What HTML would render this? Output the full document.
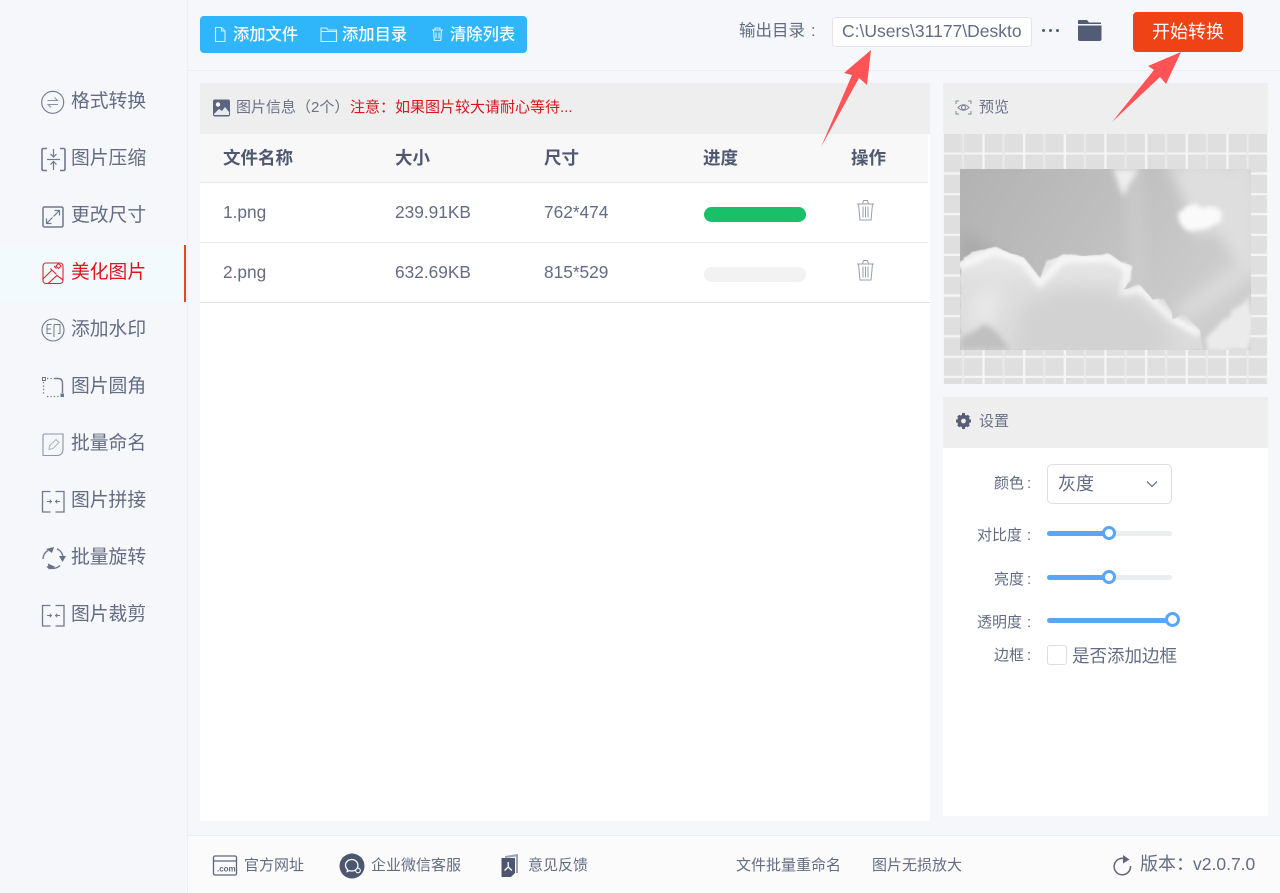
<!DOCTYPE html>
<html lang="zh"><head><meta charset="utf-8"><title>图片转换</title>
<style>
*{box-sizing:border-box}
html,body{margin:0;padding:0}
body{width:1280px;height:893px;overflow:hidden;position:relative;background:#f6f7fb;font-family:"Liberation Sans","Noto Sans CJK SC",sans-serif;color:#5b6479}
.a{position:absolute;white-space:nowrap}
svg{position:absolute;overflow:visible}
.nav{left:71px;font-size:18.800px;line-height:26px;color:#636c82}
.th{font-size:17.500px;font-weight:700;color:#4f5870;line-height:24px;top:146px}
.td{font-size:17.300px;color:#636c82;line-height:24px}
.lab{font-size:15px;line-height:20px;color:#636c82}
.lab i{font-style:normal;margin-left:3px}
.tw{font-size:16.300px;color:#fff;line-height:22px;top:24px;font-weight:500}
.ft{font-size:15px;color:#636c82;line-height:20px;top:856px}
.i{fill:none;stroke:#6f788e;stroke-width:1.100}
</style></head><body>

<!-- structure -->
<div class="a" style="left:187px;top:0;width:1px;height:893px;background:#eef0f4"></div>
<div class="a" style="left:188px;top:70px;width:1092px;height:1px;background:#eceef2"></div>
<div class="a" style="left:0;top:245px;width:187px;height:57px;background:#f2fafe"></div>
<div class="a" style="left:184px;top:245px;width:2px;height:57px;background:#f0431a"></div>

<!-- sidebar icons -->
<svg style="left:0;top:0" width="70" height="640" viewBox="0 0 70 640">
 <g class="i">
  <circle cx="52.700" cy="102.300" r="11"/><path d="M47.500 100.500h10l-3-3M58 104.500H48l3 3" stroke="#8a92a4"/>
  <path d="M47 148.500h-3.500q-1.500 0-1.500 1.500v19q0 1.500 1.500 1.500H47M60 148.500h3.500q1.500 0 1.500 1.500v19q0 1.500-1.500 1.500H60" stroke-width="1.600"/>
  <path d="M47 159.500h13" stroke-width="1.200"/>
  <path d="M53.500 149v7.500m-3-2.500l3 3 3-3M53.500 170v-8m-3 2.500l3-3 3 3" stroke-width="1.200"/>
  <rect x="43" y="207" width="20" height="20" rx="1.500" stroke-width="1.500"/><path d="M46.500 223.500l6-6M46.500 218.500v5h5M59.500 210.500l-6 6M54.500 210.500h5v5" stroke-width="1.200"/>
  <circle cx="53" cy="330" r="11"/><path d="M47 324.500h4.500M47 324.500v9h4.500M47 329h4M54 324.500h6v9h-2M54 324.500v12.500" stroke-width="1"/>
  <path d="M43.500 382v13M47 396.500h12M47 378.500h5" stroke-dasharray="1.300 2.100" stroke-width="1.300"/>
  <path d="M54 378.500h4q4.500 0 4.500 4.500v10" stroke-width="1.400"/>
  <rect x="42.500" y="377.500" width="3" height="3" stroke-width="1"/>
  <path d="M45 434h18v15q0 6.500-6.500 6.500H43V436q0-2 2-2z" stroke="#8d95a7"/><path d="M49 449.500l1-4 6-6 3 3-6 6z" stroke="#b0b5c2"/>
  <path d="M50.500 491.500H42.500v20.500h8M55.500 491.500h8.500v20.500h-8.500" stroke-width="1.300"/><path d="M47 501.500h4.500m-1.800-1.800l1.800 1.800-1.800 1.800M60 501.500h-4.500m1.800-1.800l-1.800 1.800 1.800 1.800" stroke-width="1"/>
  <path d="M50.500 605.500H42.500v20.500h8M55.500 605.500h8.500v20.500h-8.500" stroke-width="1.300"/><path d="M47 615.500h4.500m-1.800-1.800l1.800 1.800-1.800 1.800M60 615.500h-4.500m1.800-1.800l-1.800 1.800 1.800 1.800" stroke-width="1"/>
  <path d="M43 559a10 10 0 0 1 5-8.500M57 548.800a10 10 0 0 1 6 8.500M60 565.500a10 10 0 0 1-13 1" stroke-width="1.400"/>
 </g>
 <path fill="#667087" d="M46 549l8-2-2 6zM59 556h7l-3.500 6zM48 563.500l7.500 3.500-7 2.500z"/>
 <rect x="60.500" y="393.500" width="3.500" height="3.500" fill="#6f788e"/>
 <g fill="none" stroke="#d9262c" stroke-width="1.100">
  <rect x="43" y="263" width="20" height="20.500" rx="3"/>
  <path d="M43 279l9-9 4.500 4.500M48 283.500l9-8 6 4.500M50.500 268.500l2 2M54 266l2.500 2.500M58.500 263.500l2.500 2.500-2.500 2.500-2.500-2.500z"/>
 </g>
</svg>
<div class="a nav" style="top:88px">格式转换</div>
<div class="a nav" style="top:145px">图片压缩</div>
<div class="a nav" style="top:202px">更改尺寸</div>
<div class="a nav" style="top:259px;color:#e1141c">美化图片</div>
<div class="a nav" style="top:316px">添加水印</div>
<div class="a nav" style="top:373px">图片圆角</div>
<div class="a nav" style="top:430px">批量命名</div>
<div class="a nav" style="top:487px">图片拼接</div>
<div class="a nav" style="top:544px">批量旋转</div>
<div class="a nav" style="top:601px">图片裁剪</div>

<!-- toolbar -->
<div class="a" style="left:200px;top:16px;width:327px;height:37px;background:#2fb6fa;border-radius:4px"></div>
<svg style="left:200px;top:16px" width="327" height="37" fill="none" stroke="#d5f0ff" stroke-width="1.100">
 <path d="M15.500 11.500h6l3.500 3.500v10.500h-9.500zM21.500 11.500v3.500H25"/>
 <path d="M121 12h5.500l1.500 2h8.500v11.500H121zM121 15.500h15.500"/>
 <path d="M232 14h11M235 14v-2h5v2M233.500 14l.8 10.500h6.400l.8-10.500M236 16.500v6M239 16.500v6"/>
</svg>
<div class="a tw" style="left:233px">添加文件</div>
<div class="a tw" style="left:342px">添加目录</div>
<div class="a tw" style="left:450px">清除列表</div>

<div class="a" style="left:739px;top:19px;font-size:16.500px;line-height:24px;color:#636c82">输出目录<span style="margin-left:6px">:</span></div>
<div class="a" style="left:832px;top:17px;width:200px;height:30px;background:#fff;border:1px solid #e2e4ea;border-radius:4px"></div>
<div class="a" style="left:842px;top:20px;font-size:17.500px;line-height:22px;color:#636c82;width:181px;overflow:hidden">C:\Users\31177\Deskto</div>
<svg style="left:1040px;top:20px" width="70" height="24" fill="#535c75">
 <circle cx="3.500" cy="10.500" r="1.500"/><circle cx="10.500" cy="10.500" r="1.500"/><circle cx="17.500" cy="10.500" r="1.500"/>
 <path d="M38 1q0-1 1-1h8l2 2.500h12v1.500H38z"/><path d="M38 5.500h23.500V19q0 2-2 2H40q-2 0-2-2z"/>
</svg>
<div class="a" style="left:1133px;top:12px;width:110px;height:40px;background:#f04315;border-radius:4px;color:#fff;font-size:18px;line-height:40px;text-align:center">开始转换</div>

<!-- main table -->
<div class="a" style="left:200px;top:83px;width:730px;height:738px;background:#fff"></div>
<div class="a" style="left:200px;top:83px;width:730px;height:51px;background:#eeeeef"></div>
<div class="a" style="left:200px;top:134px;width:728px;height:49px;background:#f8f8f9;border-bottom:1px solid #e8e9ec"></div>
<div class="a" style="left:200px;top:242px;width:728px;height:1px;background:#e8e9ec"></div>
<div class="a" style="left:200px;top:302px;width:730px;height:1px;background:#dfe0e4"></div>
<svg style="left:213px;top:99px" width="18" height="18"><rect width="17" height="17" y=".5" rx="2" fill="#5b6580"/><circle cx="5" cy="5.500" r="2.200" fill="#fff"/><path d="M1 15l5-5 3 2 3-4 4 5v3H1z" fill="#e8eaf0"/></svg>
<div class="a" style="left:236px;top:98px;font-size:15px;line-height:20px;color:#6a7287">图片信息（2个）</div>
<div class="a" style="left:350px;top:98px;font-size:15px;line-height:20px;color:#d9151b">注意：如果图片较大请耐心等待...</div>

<div class="a th" style="left:223px">文件名称</div>
<div class="a th" style="left:395px">大小</div>
<div class="a th" style="left:544px">尺寸</div>
<div class="a th" style="left:703px">进度</div>
<div class="a th" style="left:851px">操作</div>

<div class="a td" style="left:223px;top:200px">1.png</div>
<div class="a td" style="left:395px;top:200px">239.91KB</div>
<div class="a td" style="left:544px;top:200px">762*474</div>
<div class="a" style="left:704px;top:207px;width:102px;height:15px;border-radius:8px;background:#1abf6a"></div>
<div class="a td" style="left:223px;top:260px">2.png</div>
<div class="a td" style="left:395px;top:260px">632.69KB</div>
<div class="a td" style="left:544px;top:260px">815*529</div>
<div class="a" style="left:704px;top:267px;width:102px;height:15px;border-radius:8px;background:#f2f2f3"></div>
<svg style="left:856px;top:198px" width="20" height="84" fill="none" stroke="#979dad" stroke-width="1">
 <path d="M1 6h17M6.500 6l1-3.500h4l1 3.500M2.500 6l1.500 16h11l1.500-16M7 8.500v11M9.500 8.500v11M12 8.500v11"/>
 <path transform="translate(0,60)" d="M1 6h17M6.500 6l1-3.500h4l1 3.500M2.500 6l1.500 16h11l1.500-16M7 8.500v11M9.500 8.500v11M12 8.500v11"/>
</svg>

<!-- preview panel -->
<div class="a" style="left:943px;top:83px;width:325px;height:51px;background:#eeeeef"></div>
<svg style="left:955px;top:99px" width="18" height="18" fill="none" stroke="#7d8598" stroke-width="1"><path d="M1 5V2h3M13 2h3v3M1 12v3h3M13 15h3v-3"/><path d="M3 8.500Q8.500 3 14 8.500 8.500 14 3 8.500z"/><circle cx="8.500" cy="8.500" r="2"/></svg>
<div class="a" style="left:979px;top:98px;font-size:15px;line-height:20px;color:#6a7287">预览</div>
<svg style="left:943px;top:134px" width="325" height="250">
 <defs>
  <pattern id="g" x="1" y="0" width="40.660" height="40.660" patternUnits="userSpaceOnUse">
   <rect width="40.660" height="40.660" fill="#f5f5f6"/>
   <rect x="0" y="0" width="38.300" height="18.500" fill="#dfdfdf"/>
   <rect x="0" y="20.600" width="38.300" height="17.800" fill="#dfdfdf"/>
   <rect x="17.800" y="0" width="2.300" height="40.660" fill="#e9e9ea"/>
  </pattern>
  <linearGradient id="sky" x1="0" y1="0" x2="1" y2=".4"><stop offset="0" stop-color="#b2b2b2"/><stop offset=".45" stop-color="#bdbdbd"/><stop offset="1" stop-color="#cdcdcd"/></linearGradient>
  <linearGradient id="cl" x1="0" y1="0" x2="0" y2="1"><stop offset="0" stop-color="#eaeaea"/><stop offset=".4" stop-color="#dedede"/><stop offset="1" stop-color="#dadada"/></linearGradient>
  <filter id="fl" x="-5%" y="-5%" width="110%" height="110%"><feTurbulence type="fractalNoise" baseFrequency=".12" numOctaves="3" seed="4"/><feDisplacementMap in="SourceGraphic" scale="4"/><feGaussianBlur stdDeviation=".7"/></filter>
  <filter id="fl2" x="-30%" y="-30%" width="160%" height="160%"><feTurbulence type="fractalNoise" baseFrequency=".05" numOctaves="3" seed="8"/><feDisplacementMap in="SourceGraphic" scale="20"/><feGaussianBlur stdDeviation="6"/></filter>
  <filter id="fl3" x="-30%" y="-30%" width="160%" height="160%"><feTurbulence type="fractalNoise" baseFrequency=".07" numOctaves="3" seed="3"/><feDisplacementMap in="SourceGraphic" scale="10"/><feGaussianBlur stdDeviation="2"/></filter>
  <filter id="b2" x="-30%" y="-30%" width="160%" height="160%"><feGaussianBlur stdDeviation="8"/></filter>
  <filter id="b3" x="-30%" y="-30%" width="160%" height="160%"><feGaussianBlur stdDeviation="3"/></filter>
  <clipPath id="c"><rect x="17" y="35" width="291" height="181"/></clipPath>
  <clipPath id="cc"><path d="M17 128L29 118 52 113 67 119 80 123 87 131 97 144 104 128 120 120 140 122 167 120 179 129 189 131 187 146 180 156 197 151 210 166 220 164 229 178 229 185 242 181 257 196 260 216 H17z"/></clipPath>
 </defs>
 <rect width="325" height="250" fill="url(#g)"/>
 <g clip-path="url(#c)">
  <rect x="17" y="35" width="291" height="181" fill="url(#sky)"/>
  <path d="M17 95l60 40H17z" fill="#a8a8a8" filter="url(#b2)"/>
  <path d="M183 35h12l8 120h-12z" fill="#cecece" filter="url(#b2)"/>
  <path d="M308 118l-80 62 14 8 66-45z" fill="#dcdcdc" filter="url(#b2)"/>
  <path d="M222 30h90v110q-6 0-16-8-8-14-14-28-18-2-34-6-8-14-4-26-10-20-22-42z" fill="#dedede" filter="url(#fl2)"/>
  <path d="M236 76q14-6 22-3 16-2 22 6 4 14-8 12-14 5-30 4-8-8-6-19z" fill="#fafafa" filter="url(#fl3)"/>
  <path d="M170 35h26l-10 16-6 12z" fill="#eeeeee" filter="url(#b3)"/>
  <path d="M263 216q-3-14 8-22 14-12 24-20l13-12v54z" fill="#ebebeb" filter="url(#fl3)"/>
  <path d="M17 128L29 118 52 113 67 119 80 123 87 131 97 144 104 128 120 120 140 122 167 120 179 129 189 131 187 146 180 156 197 151 210 166 220 164 229 178 229 185 242 181 257 196 260 216H17z" fill="url(#cl)" filter="url(#fl)"/>
  <g clip-path="url(#cc)">
   <path d="M17 132L52 117 80 127 97 150 120 125 167 124 185 135 180 160 197 155 229 185 257 200" fill="none" stroke="#f8f8f8" stroke-width="7" filter="url(#b3)"/>
   <path d="M80 170q50-25 100-8 30 14 50 40l-10 20H70z" fill="#d2d2d2" filter="url(#b2)"/>
   <path d="M30 160q20-10 30-5l-10 35-25 5z" fill="#e8e8e8" filter="url(#b2)"/>
   <path d="M17 216v-12q15-6 24-14 14 6 26 26z" fill="#c0c0c0" filter="url(#b3)"/>
  </g>
 </g>
</svg>

<!-- settings panel -->
<div class="a" style="left:943px;top:397px;width:325px;height:419px;background:#fff"></div>
<div class="a" style="left:943px;top:397px;width:325px;height:51px;background:#eeeeef"></div>
<svg style="left:955px;top:412px" width="18" height="18" viewBox="0 0 18 18"><circle cx="8.500" cy="9" r="6.300" fill="#565f77"/><path d="M8.500 1v16M1 9h15M3.200 3.700l10.600 10.600M13.800 3.700L3.200 14.300" stroke="#565f77" stroke-width="3"/><circle cx="8.500" cy="9" r="2.400" fill="#eeeeef"/></svg>
<div class="a" style="left:979px;top:412px;font-size:15px;line-height:20px;color:#6a7287">设置</div>
<div class="a lab" style="left:994px;top:474px">颜色<i>:</i></div>
<div class="a" style="left:1047px;top:464px;width:125px;height:40px;border:1px solid #dcdee2;border-radius:5px;background:#fff"></div>
<div class="a" style="left:1058px;top:472px;font-size:18px;line-height:24px;color:#636c82">灰度</div>
<svg style="left:1146px;top:480px" width="12" height="9" fill="none" stroke="#6e7589" stroke-width="1.300"><path d="M1 1.500l5 5 5-5"/></svg>

<div class="a lab" style="left:977px;top:526px">对比度<i style="margin-left:5px">:</i></div>
<div class="a lab" style="left:994px;top:570px">亮度<i>:</i></div>
<div class="a lab" style="left:977px;top:613px">透明度<i style="margin-left:5px">:</i></div>
<div class="a lab" style="left:994px;top:646px">边框<i>:</i></div>

<div class="a" style="left:1047px;top:531px;width:125px;height:5px;border-radius:3px;background:#ebecee"></div>
<div class="a" style="left:1047px;top:531px;width:62px;height:5px;border-radius:3px;background:#5aa5f4"></div>
<div class="a" style="left:1102px;top:526px;width:14px;height:14px;border-radius:50%;background:#fff;border:3px solid #5aa5f4"></div>
<div class="a" style="left:1047px;top:575px;width:125px;height:5px;border-radius:3px;background:#ebecee"></div>
<div class="a" style="left:1047px;top:575px;width:62px;height:5px;border-radius:3px;background:#5aa5f4"></div>
<div class="a" style="left:1102px;top:570px;width:14px;height:14px;border-radius:50%;background:#fff;border:3px solid #5aa5f4"></div>
<div class="a" style="left:1047px;top:618px;width:125px;height:5px;border-radius:3px;background:#5aa5f4"></div>
<div class="a" style="left:1165px;top:612px;width:15px;height:15px;border-radius:50%;background:#fff;border:3px solid #5aa5f4"></div>
<div class="a" style="left:1047px;top:645px;width:20px;height:20px;border:1px solid #dcdee2;border-radius:3px;background:#fff"></div>
<div class="a" style="left:1072px;top:645px;font-size:17.500px;line-height:22px;color:#636c82">是否添加边框</div>

<!-- footer -->
<div class="a" style="left:188px;top:835px;width:1092px;height:58px;background:#fbfbfc;border-top:1px solid #eceef2"></div>
<svg style="left:212px;top:853px" width="160" height="26">
 <g fill="none" stroke="#5d667d" stroke-width="1.300"><rect x="1.500" y="3" width="23" height="19" rx="1.500"/><path d="M1.500 8h23"/></g>
 <text x="5" y="18.500" font-size="8" font-weight="700" font-family="Liberation Sans" fill="#5d667d">.com</text>
 <circle cx="140" cy="13" r="12.500" fill="#4d566f"/>
 <path d="M133.500 12.500c0-3.500 2.800-6 6.200-6s6.200 2.500 6.200 6-2.800 5.500-6.200 5.500c-1 0-1.800 0-2.500-.4l-2 1 .4-2.200c-1.200-1-2.100-2.400-2.100-3.900z" fill="none" stroke="#fff" stroke-width="1.300"/>
 <circle cx="146" cy="17.500" r="2.300" fill="#4d566f" stroke="#fff" stroke-width="1.100"/>
</svg>
<svg style="left:500px;top:853px" width="24" height="26"><path d="M5 3l13-2v19h-2V3.500L5 5z" fill="#9aa0b0"/><path d="M1.500 5H15v15l-4 4H1.500z" fill="#4d566f"/><path d="M8.200 9v5m0 0l-3.700 3.500m3.700-3.500l3.700 3.500" stroke="#fff" stroke-width="1.300" fill="none"/></svg>
<div class="a ft" style="left:244px">官方网址</div>
<div class="a ft" style="left:371px">企业微信客服</div>
<div class="a ft" style="left:528px">意见反馈</div>
<div class="a ft" style="left:736px">文件批量重命名</div>
<div class="a ft" style="left:872px">图片无损放大</div>
<svg style="left:1112px;top:853px" width="22" height="24" fill="none" stroke="#5d667d" stroke-width="1.500"><path d="M14.500 6.500A8.200 8.200 0 1 0 18.500 13"/><path d="M11 2l6.500 4.500-6.500 4z" fill="#5d667d" stroke="none"/></svg>
<div class="a" style="left:1140px;top:852px;font-size:18px;line-height:24px;color:#636c82">版本：<span style="font-size:17.500px;margin-left:-1px">v2.0.7.0</span></div>

<!-- arrows -->
<svg style="left:0;top:0" width="1280" height="200" fill="#ff5356">
 <path d="M871 50L867 85 859 78 821 147 852 75 844 73z"/>
 <path d="M1181 52L1166 84 1160 77 1112 122 1154 70 1148 66z"/>
</svg>
</body></html>
